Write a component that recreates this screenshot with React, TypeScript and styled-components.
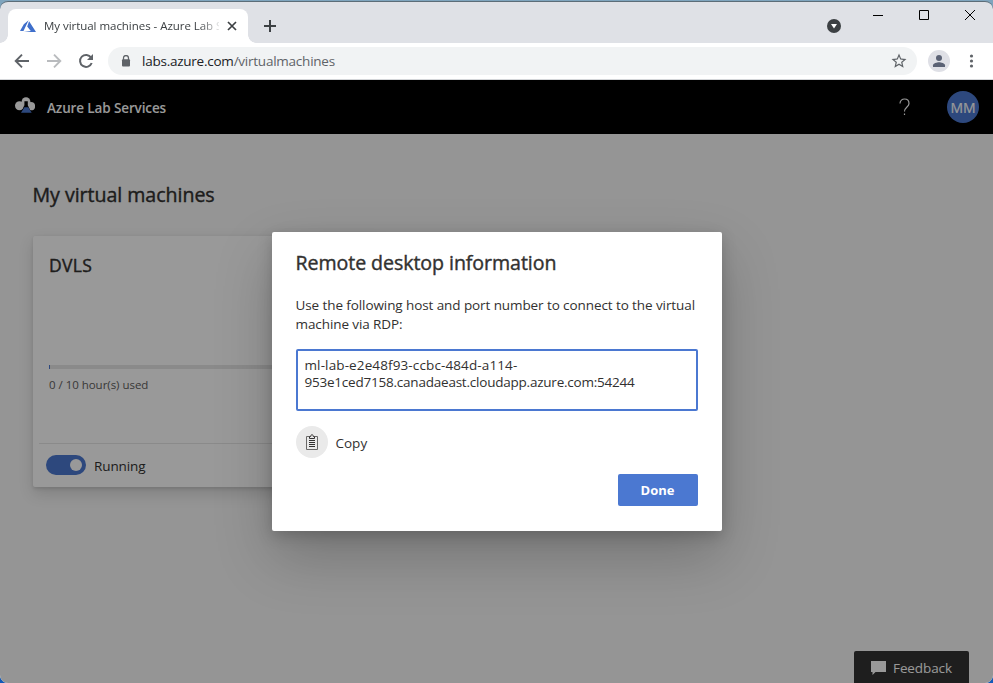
import React from 'react';
import styled, { createGlobalStyle } from 'styled-components';

const GlobalStyle = createGlobalStyle`
  * { box-sizing: border-box; }
  body { margin: 0; overflow: hidden; font-family: 'Open Sans', 'Noto Sans', sans-serif; }
  button { font: inherit; border: 0; padding: 0; background: none; }
  h1, h2, p { margin: 0; }
  svg { display: block; flex: none; }
`;

const Desktop = styled.div`
  height: 683px;
  width: 993px;
  padding-top: 1px;
  background: linear-gradient(#7fa5be, #1259b8 80%);
`;

const BrowserWindow = styled.div`
  display: flex;
  flex-direction: column;
  height: 682px;
  border-top: 1px solid #5c6d78;
  border-radius: 8px;
  overflow: hidden;
  background: #dfe1e6;
`;

const TitleBar = styled.div`
  display: flex;
  align-items: flex-start;
  height: 41px;
  flex: none;
  padding-left: 8px;
`;

const Tab = styled.div`
  position: relative;
  display: flex;
  align-items: center;
  width: 240px;
  height: 34px;
  margin-top: 7px;
  padding: 0 11px 1px 12px;
  border-radius: 8px 8px 0 0;
  background: #fff;

  &::before,
  &::after {
    content: '';
    position: absolute;
    bottom: 0;
    width: 8px;
    height: 8px;
  }
  &::before {
    left: -8px;
    background: radial-gradient(circle at 0 0, transparent 7.5px, #fff 8px);
  }
  &::after {
    right: -8px;
    background: radial-gradient(circle at 100% 0, transparent 7.5px, #fff 8px);
  }
`;

const TabTitle = styled.span`
  width: 175px;
  margin-left: 8px;
  white-space: nowrap;
  font-size: 11.5px;
  letter-spacing: -0.04px;
  color: #3c4043;
  mask-image: linear-gradient(90deg, #000 155px, transparent 178px);
`;

const TabClose = styled.button`
  margin-left: 8px;
`;

const NewTab = styled.button`
  margin: 17px 0 0 15px;
`;

const TabSearch = styled.button`
  margin: 17px 31px 0 auto;
`;

const WindowControls = styled.div`
  display: flex;
  gap: 34px;
  padding: 7px 17px 0 0;
`;

const Toolbar = styled.div`
  display: flex;
  align-items: center;
  height: 37px;
  flex: none;
  padding: 0 12px 0 13px;
  border-bottom: 1px solid #d4d6d9;
  background: #fff;
`;

const NavButtons = styled.div`
  display: flex;
  gap: 14px;
  margin-right: 13px;
`;

const AddressBar = styled.div`
  display: flex;
  align-items: center;
  width: 809px;
  height: 28px;
  padding: 0 9px 0 12px;
  border-radius: 14px;
  background: #f1f3f4;
`;

const Url = styled.span`
  flex: 1;
  margin-left: 10px;
  font-size: 13.5px;
  letter-spacing: -0.24px;
  color: #5f6368;
`;

const Host = styled.span`
  color: #202124;
`;

const Profile = styled.div`
  margin: 0 16px 0 11px;
`;

const Page = styled.div`
  position: relative;
  display: flex;
  flex-direction: column;
  flex: 1;
  background: #f8f8f8;
`;

const AppHeader = styled.header`
  display: flex;
  align-items: center;
  height: 54px;
  padding: 0 14px 0 14px;
  background: #000;
  color: #fff;
`;

const LabLogo = styled.div`
  margin-top: -2px;
`;

const AppName = styled.span`
  flex: 1;
  margin: 2px 0 0 12px;
  font-size: 13.5px;
  font-weight: 600;
  letter-spacing: -0.12px;
`;

const Avatar = styled.div`
  display: flex;
  align-items: center;
  justify-content: center;
  width: 32px;
  height: 32px;
  margin-left: 37px;
  border-radius: 50%;
  background: #4b78d1;
  font-size: 14px;
  letter-spacing: -0.1px;
  -webkit-text-stroke: 0.2px;
`;

const Main = styled.main`
  flex: 1;
  padding: 47px 33px 0;
`;

const PageTitle = styled.h1`
  margin-left: -0.5px;
  font-size: 19.6px;
  line-height: 28px;
  font-weight: 400;
  letter-spacing: -0.04px;
  color: #323130;
  -webkit-text-stroke: 0.4px;
`;

const Card = styled.section`
  display: flex;
  flex-direction: column;
  width: 350px;
  height: 251px;
  margin-top: 27px;
  border-radius: 2px;
  background: #fff;
  box-shadow: 0 6.4px 14.4px rgba(0, 0, 0, 0.132), 0 1.2px 3.6px rgba(0, 0, 0, 0.108);
`;

const CardBody = styled.div`
  flex: 1;
  padding: 17px 16px 0;
`;

const MachineName = styled.h2`
  height: 112px;
  font-size: 17.5px;
  line-height: 24px;
  font-weight: 400;
  letter-spacing: 0.35px;
  color: #323130;
  -webkit-text-stroke: 0.4px;
`;

const UsageTrack = styled.div`
  height: 4px;
  border-left: 1px solid #4b78d1;
  background: #e6e6e6;
`;

const UsageText = styled.p`
  margin-top: 6px;
  font-size: 11.5px;
  line-height: 20px;
  letter-spacing: -0.03px;
  color: #605e5c;
`;

const CardFooter = styled.div`
  display: flex;
  align-items: center;
  height: 44px;
  margin: 0 6px;
  padding: 0 0 2px 7px;
  border-top: 1px solid #e6e6e6;
`;

const Toggle = styled.div`
  display: flex;
  align-items: center;
  justify-content: flex-end;
  width: 40px;
  height: 20px;
  padding-right: 4px;
  border-radius: 10px;
  background: #4b78d1;
`;

const Knob = styled.div`
  width: 12px;
  height: 12px;
  border-radius: 50%;
  background: #fff;
`;

const Status = styled.span`
  margin: 2px 0 0 8px;
  font-size: 13.5px;
  letter-spacing: -0.1px;
  color: #323130;
`;

const Feedback = styled.button`
  position: absolute;
  right: 24px;
  bottom: 0;
  display: flex;
  align-items: center;
  width: 115px;
  height: 32px;
  padding: 2px 0 0 17px;
  gap: 7px;
  border-radius: 2px 2px 0 0;
  background: #333;
  color: #fff;
  font-size: 13.5px;
  letter-spacing: -0.09px;
`;

const Overlay = styled.div`
  position: absolute;
  inset: 0;
  display: flex;
  align-items: flex-start;
  justify-content: center;
  padding: 152px 0 0 1px;
  background: rgba(0, 0, 0, 0.4);
`;

const Dialog = styled.div`
  display: flex;
  flex-direction: column;
  width: 450px;
  height: 299px;
  padding: 17px 24px 25px;
  border-radius: 2px;
  background: #fff;
  color: #323130;
  box-shadow: 0 25.6px 57.6px rgba(0, 0, 0, 0.22), 0 4.8px 14.4px rgba(0, 0, 0, 0.18);
`;

const DialogTitle = styled.h2`
  margin-left: -0.5px;
  font-size: 19.6px;
  line-height: 28px;
  font-weight: 400;
  letter-spacing: -0.07px;
  -webkit-text-stroke: 0.4px;
`;

const DialogText = styled.p`
  margin: 19px 0 0 -0.5px;
  font-size: 13.5px;
  line-height: 19px;
  letter-spacing: -0.09px;
  white-space: nowrap;
`;

const AddressField = styled.div`
  width: 402px;
  height: 62px;
  margin-top: 15px;
  padding: 6px 6.5px;
  border: 2px solid #4b78d1;
  border-radius: 2px;
  font-size: 13.5px;
  line-height: 17px;
  white-space: nowrap;
`;

const HostLine = styled.div<{ $spacing: number }>`
  letter-spacing: ${(p) => p.$spacing}px;
`;

const CopyRow = styled.div`
  display: flex;
  align-items: center;
  gap: 7.5px;
  margin-top: 15px;
  font-size: 13.5px;
`;

const CopyLabel = styled.span`
  padding-top: 2px;
`;

const CopyButton = styled.button`
  display: flex;
  align-items: center;
  justify-content: center;
  width: 32px;
  height: 32px;
  border-radius: 50%;
  background: #eaeaea;
`;

const DoneButton = styled.button`
  align-self: flex-end;
  width: 80px;
  height: 32px;
  margin-top: auto;
  padding-right: 1px;
  border-radius: 2px;
  background: #4b78d1;
  color: #fff;
  font-size: 13px;
  font-weight: 700;
`;

const AzureIcon = () => (
  <svg width="16" height="14" viewBox="0 0 16 14">
    <path d="M8.6 1.2 3.8 5.3 0 12h3.5zM9.1 2.3 7.2 7.6l3.6 4.4L3.9 13.1H16z" fill="#3f6fcb" />
  </svg>
);

const LabIcon = () => (
  <svg width="21" height="18" viewBox="0 0 21 18">
    <circle cx="5.5" cy="8.8" r="4.5" fill="#fff" />
    <circle cx="17" cy="9.2" r="4.1" fill="#fff" />
    <circle cx="12" cy="4.7" r="4.4" fill="#fff" />
    <path d="M10.4 4.2h3.4v4l3.8 7.8H6.8l3.6-7.6z" fill="#000" />
    <path d="M10.4 10.3h3.9l3.4 5.5H7z" fill="#4b78d1" />
  </svg>
);

const ArrowIcon = ({ color, flip }: { color: string; flip?: boolean }) => (
  <svg width="18" height="18" viewBox="0 0 18 18" fill="none" stroke={color} strokeWidth="1.9">
    <path d={flip ? 'M2 9h13M9 2.7 15.3 9 9 15.3' : 'M16 9H3M9 2.7 2.7 9 9 15.3'} />
  </svg>
);

export default function App() {
  return (
    <>
      <GlobalStyle />
      <Desktop>
        <BrowserWindow>
          <TitleBar>
            <Tab>
              <AzureIcon />
              <TabTitle>My virtual machines - Azure Lab S</TabTitle>
              <TabClose aria-label="Close tab">
                <svg width="10" height="10" viewBox="0 0 10 10" stroke="#3c4043" strokeWidth="1.7">
                  <path d="m1 1 8 8M9 1 1 9" />
                </svg>
              </TabClose>
            </Tab>
            <NewTab aria-label="New tab">
              <svg width="14" height="14" viewBox="0 0 14 14" stroke="#3c4043" strokeWidth="2">
                <path d="M7 1v12M1 7h12" />
              </svg>
            </NewTab>
            <TabSearch aria-label="Search tabs">
              <svg width="14" height="14" viewBox="0 0 14 14">
                <circle cx="7" cy="7" r="7" fill="#3c4043" />
                <path d="M4 5h6L7 9.5z" fill="#fff" />
              </svg>
            </TabSearch>
            <WindowControls>
              <svg width="12" height="12" viewBox="0 0 12 12" stroke="#000">
                <path d="M1 6.5h10" />
              </svg>
              <svg width="12" height="12" viewBox="0 0 12 12" stroke="#000" fill="none">
                <path d="M1.5 1.5h9v9h-9z" />
              </svg>
              <svg width="12" height="12" viewBox="0 0 12 12" stroke="#000">
                <path d="m1 1 10 10M11 1 1 11" />
              </svg>
            </WindowControls>
          </TitleBar>

          <Toolbar>
            <NavButtons>
              <ArrowIcon color="#5f6368" />
              <ArrowIcon color="#b9bbbe" flip />
              <svg width="18" height="18" viewBox="0 0 18 18">
                <path d="M14.1 5.6A6 6 0 1 0 14.7 11" fill="none" stroke="#5f6368" strokeWidth="2" />
                <path d="M16 2v6h-6z" fill="#5f6368" />
              </svg>
            </NavButtons>
            <AddressBar>
              <svg width="12" height="12" viewBox="0 0 12 12">
                <path d="M3.5 5V3a2.5 2.5 0 0 1 5 0v2" fill="none" stroke="#5f6368" strokeWidth="1.3" />
                <rect x="2" y="4.3" width="8" height="7.2" rx="1" fill="#5f6368" />
              </svg>
              <Url>
                <Host>labs.azure.com</Host>/virtualmachines
              </Url>
              <svg width="18" height="18" viewBox="0 0 24 24" fill="#5f6368">
                <path d="m22 9.24-7.19-.62L12 2 9.19 8.63 2 9.24l5.46 4.73L5.82 21 12 17.27 18.18 21l-1.63-7.03zM12 15.4l-3.76 2.27 1-4.28-3.32-2.88 4.38-.38L12 6.1l1.71 4.04 4.38.38-3.32 2.88 1 4.28z" />
              </svg>
            </AddressBar>
            <Profile>
              <svg width="22" height="22" viewBox="0 0 22 22">
                <circle cx="11" cy="11" r="11" fill="#dfe0e6" />
                <circle cx="11" cy="8" r="3" fill="#5b6275" />
                <path d="M5 17v-1.8c0-2 4-3 6-3s6 1 6 3V17z" fill="#5b6275" />
              </svg>
            </Profile>
            <svg width="14" height="18" viewBox="0 0 14 18" fill="#5f6368">
              <circle cx="5.5" cy="4" r="1.6" />
              <circle cx="5.5" cy="9" r="1.6" />
              <circle cx="5.5" cy="14" r="1.6" />
            </svg>
          </Toolbar>

          <Page>
            <AppHeader>
              <LabLogo>
                <LabIcon />
              </LabLogo>
              <AppName>Azure Lab Services</AppName>
              <svg width="12" height="18" viewBox="0 0 12 18" fill="none" stroke="#fff" strokeWidth="1.2">
                <path d="M2 5.5c0-6 9-6 9 0 0 3.5-4.5 3.5-4.5 8" />
                <path d="M6.5 15.5V17" />
              </svg>
              <Avatar>MM</Avatar>
            </AppHeader>
            <Main>
              <PageTitle>My virtual machines</PageTitle>
              <Card>
                <CardBody>
                  <MachineName>DVLS</MachineName>
                  <UsageTrack />
                  <UsageText>0 / 10 hour(s) used</UsageText>
                </CardBody>
                <CardFooter>
                  <Toggle>
                    <Knob />
                  </Toggle>
                  <Status>Running</Status>
                </CardFooter>
              </Card>
            </Main>
            <Feedback>
              <svg width="15" height="14" viewBox="0 0 15 14">
                <path d="M0 0h15v11H4.5L1.5 14v-3H0z" fill="#fff" />
              </svg>
              Feedback
            </Feedback>

            <Overlay>
              <Dialog role="dialog">
                <DialogTitle>Remote desktop information</DialogTitle>
                <DialogText>
                  Use the following host and port number to connect to the virtual
                  <br />
                  machine via RDP:
                </DialogText>
                <AddressField>
                  <HostLine $spacing={0.12}>ml-lab-e2e48f93-ccbc-484d-a114-</HostLine>
                  <HostLine $spacing={-0.22}>953e1ced7158.canadaeast.cloudapp.azure.com:54244</HostLine>
                </AddressField>
                <CopyRow>
                  <CopyButton aria-label="Copy">
                    <svg width="14" height="16" viewBox="0 0 14 16" fill="none" stroke="#323130">
                      <path d="M4.5 2.5h-3v13h11v-13h-3" stroke="#6a6968" />
                      <path d="M4.5 4.5v-2h1.2c0-2.4 2.6-2.4 2.6 0h1.2v2z" />
                      <path d="M4 6.5h6M4 8.5h6M4 10.5h6M4 12.5h6" />
                    </svg>
                  </CopyButton>
                  <CopyLabel>Copy</CopyLabel>
                </CopyRow>
                <DoneButton>Done</DoneButton>
              </Dialog>
            </Overlay>
          </Page>
        </BrowserWindow>
      </Desktop>
    </>
  );
}
